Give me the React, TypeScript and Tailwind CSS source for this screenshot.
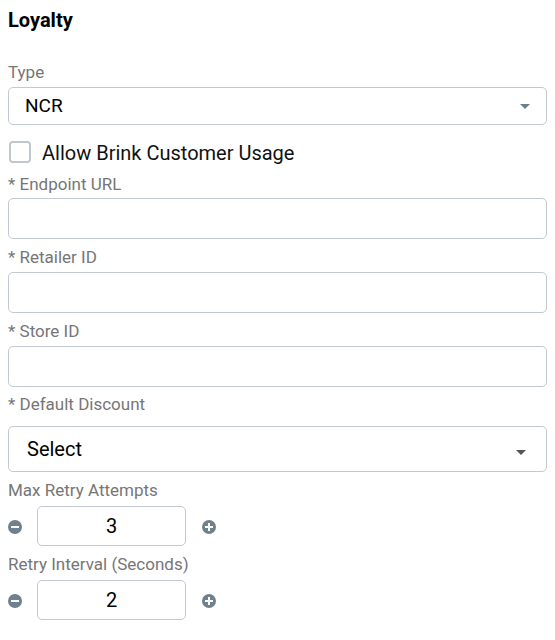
import { useState } from "react";

const LABEL = "block h-5 text-[17px] leading-5 text-[#767676]";
const INPUT =
    "block w-full h-[41px] rounded-[5px] border border-[#c3c9d2] bg-white px-4 text-[19px] text-black outline-none";

function Label({ text, className = "" }: { text: string; className?: string }) {
    return <span className={`${LABEL} ${className}`}>{text}</span>;
}

function Stepper({ value, onChange }: { value: number; onChange: (v: number) => void }) {
    return (
        <div className="flex items-center h-10">
            <button
                onClick={() => onChange(Math.max(0, value - 1))}
                className="mt-[2px] flex items-center justify-center w-[14px] h-[14px] rounded-full bg-[#6f818c]"
            >
                <span className="block w-[8px] h-[2.5px] bg-white" />
            </button>
            <input
                value={value}
                readOnly
                className="ml-[15px] w-[149px] h-10 rounded-[5px] border border-[#c3c9d2] text-center text-[20px] text-black outline-none"
            />
            <button
                onClick={() => onChange(value + 1)}
                className="relative mt-[2px] ml-4 flex items-center justify-center w-[14px] h-[14px] rounded-full bg-[#6f818c]"
            >
                <span className="block w-[8px] h-[2.5px] bg-white" />
                <span className="absolute block w-[2.5px] h-[8px] bg-white" />
            </button>
        </div>
    );
}

export default function App() {
    const [retries, setRetries] = useState(3);
    const [interval, setInterval] = useState(2);
    const [allow, setAllow] = useState(false);

    return (
        <div className="w-[555px] h-[640px] bg-white px-2 pt-2" style={{ fontFamily: "Roboto, 'Noto Sans', sans-serif" }}>
            <h2 className="h-6 text-[20px] leading-6 font-bold text-black">Loyalty</h2>

            <Label text="Type" className="mt-[30px]" />
            <div className="mt-[5px] flex items-center justify-between h-[38px] rounded-[5px] border border-[#c3c9d2] pl-4 pr-4">
                <span className="text-[19px] text-black">NCR</span>
                <svg width="10" height="5" viewBox="0 0 10 5">
                    <path d="M0 0h10L5 5z" fill="#6a7f8c" />
                </svg>
            </div>

            <label className="mt-4 flex items-center h-[22px] cursor-pointer">
                <span
                    onClick={() => setAllow(!allow)}
                    className="ml-px w-[22px] h-[22px] rounded-[4px] border-2 border-[#c0c6ce] bg-white"
                />
                <span className="ml-[11px] mt-[2px] text-[20px] text-[#111]">Allow Brink Customer Usage</span>
            </label>

            <Label text="* Endpoint URL" className="mt-[11px]" />
            <input className={`${INPUT} mt-[4px]`} />

            <Label text="* Retailer ID" className="mt-[8px]" />
            <input className={`${INPUT} mt-[5px]`} />

            <Label text="* Store ID" className="mt-[8px]" />
            <input className={`${INPUT} mt-[5px]`} />

            <Label text="* Default Discount" className="mt-[7px]" />
            <div className="mt-3 flex items-center justify-between h-[46px] rounded-[5px] border border-[#c3c9d2] pl-[18px] pr-5">
                <span className="text-[20px] text-black">Select</span>
                <svg width="10" height="5" viewBox="0 0 10 5" className="mt-[7px]">
                    <path d="M0 0h10L5 5z" fill="#555" />
                </svg>
            </div>

            <Label text="Max Retry Attempts" className="mt-2" />
            <div className="mt-[6px]">
                <Stepper value={retries} onChange={setRetries} />
            </div>

            <Label text="Retry Interval (Seconds)" className="mt-2" />
            <div className="mt-[6px]">
                <Stepper value={interval} onChange={setInterval} />
            </div>
        </div>
    );
}
